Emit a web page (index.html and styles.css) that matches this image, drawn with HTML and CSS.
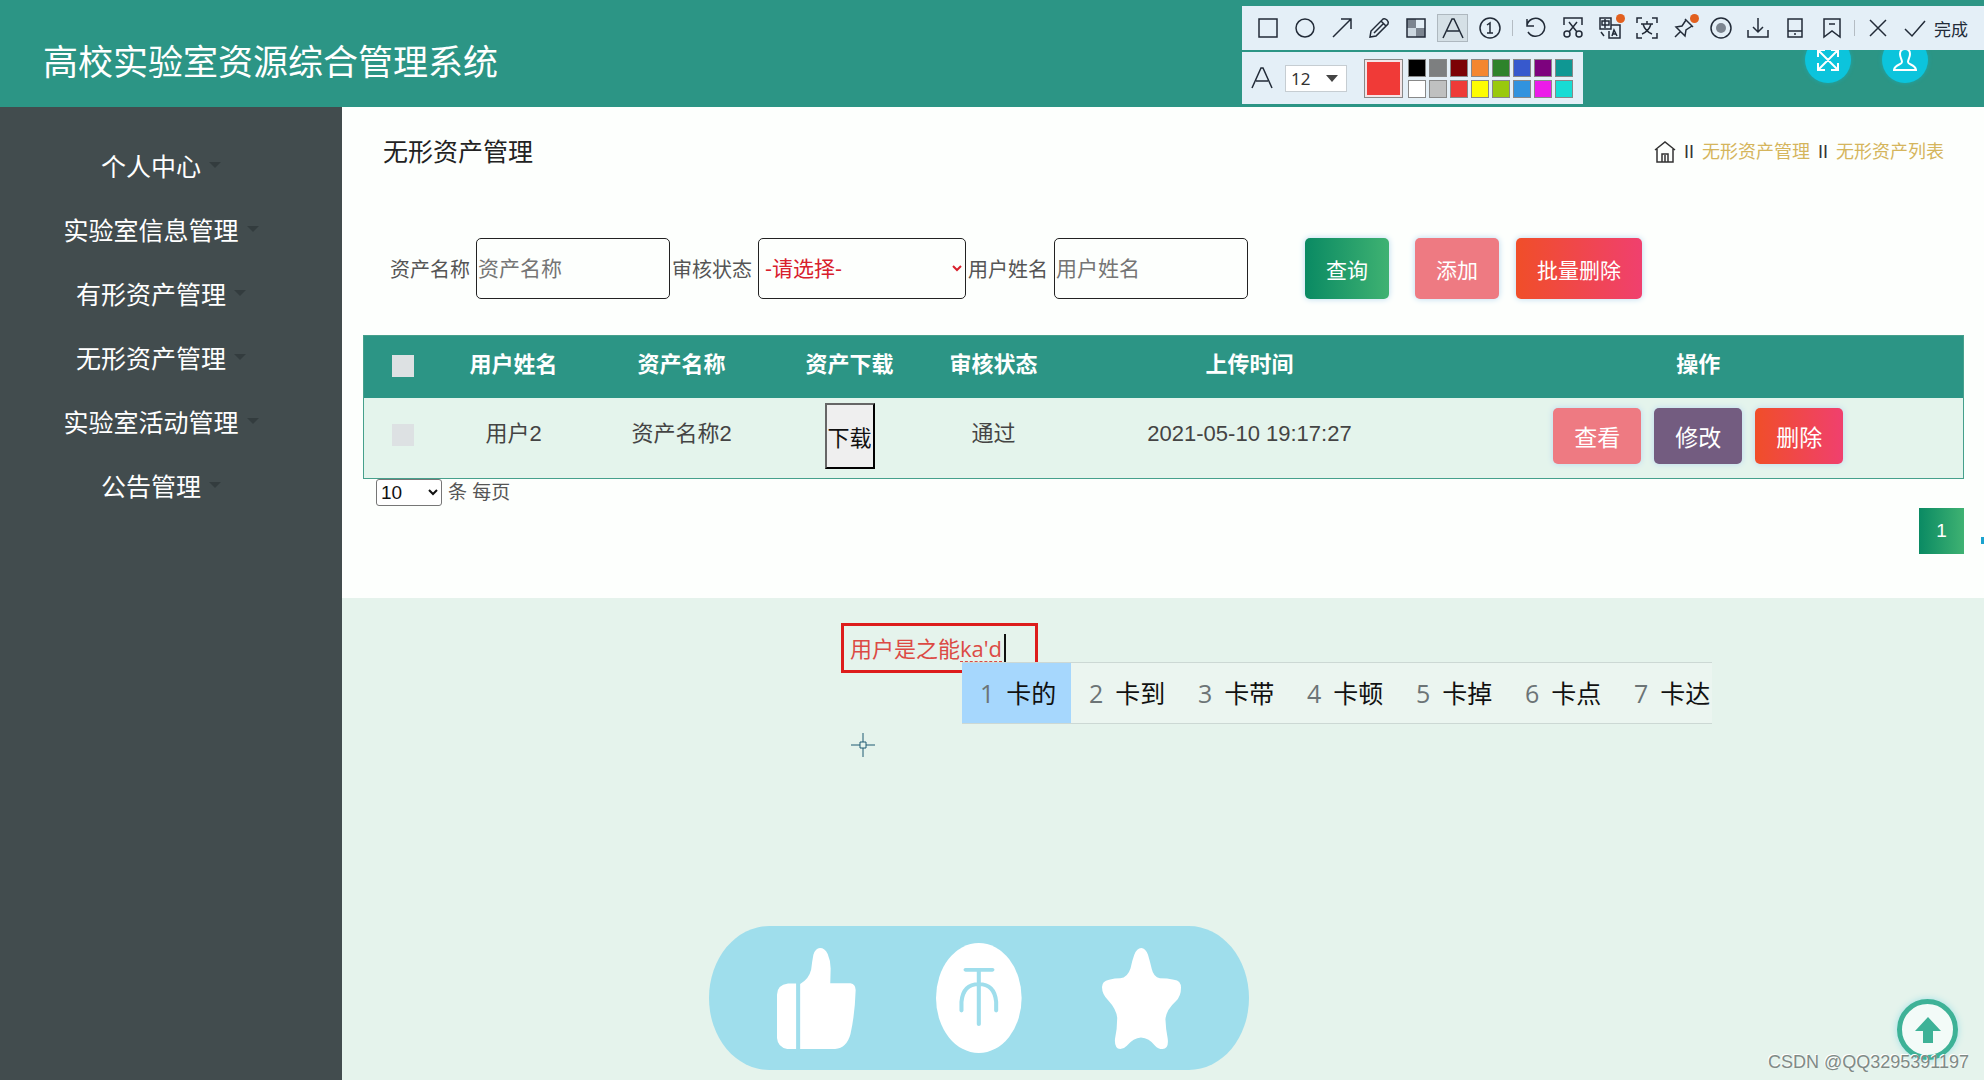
FILE: index.html
```html
<!DOCTYPE html>
<html lang="zh-CN">
<head>
<meta charset="utf-8">
<title>高校实验室资源综合管理系统</title>
<link rel="stylesheet" href="styles.css">
</head>
<body>
<header class="topbar">
  <h1 class="brand">高校实验室资源综合管理系统</h1>
  <div class="topbar-actions">
    <button class="round-btn" type="button" aria-label="全屏">
      <svg width="24" height="24" viewBox="0 0 24 24"><path d="M2 9V2h7M2 2l20 20M15 2h7v7M22 2L2 22M2 15v7h7M22 15v7h-7"/></svg>
    </button>
    <button class="round-btn" type="button" aria-label="用户">
      <svg width="24" height="24" viewBox="0 0 24 24"><path d="M12 1c-4 0-5 3-5 5 0 4 2 5 2 8 0 3-7 2-8 8h22c-1-6-8-5-8-8 0-3 2-4 2-8 0-2-1-5-5-5z"/></svg>
    </button>
  </div>
</header>

<div class="layout">
  <nav class="sidebar">
    <a class="menu-item" href="#">个人中心<i class="caret"></i></a>
    <a class="menu-item" href="#">实验室信息管理<i class="caret"></i></a>
    <a class="menu-item" href="#">有形资产管理<i class="caret"></i></a>
    <a class="menu-item" href="#">无形资产管理<i class="caret"></i></a>
    <a class="menu-item" href="#">实验室活动管理<i class="caret"></i></a>
    <a class="menu-item" href="#">公告管理<i class="caret"></i></a>
  </nav>

  <main class="content">
    <section class="panel">
      <div class="panel-head">
        <h2 class="page-title">无形资产管理</h2>
        <div class="breadcrumb">
          <a href="#" class="home" aria-label="首页">
            <svg width="22" height="22" viewBox="0 0 22 22"><path d="M1 9l10-8 10 8M3 8v13h16V8M8 21v-8h6v8M11 14v7"/></svg>
          </a>
          <span>II</span>
          <a href="#">无形资产管理</a>
          <span>II</span>
          <a href="#">无形资产列表</a>
        </div>
      </div>

      <form class="filters">
        <div class="field"><label for="asset">资产名称</label><input id="asset" class="control" type="text" placeholder="资产名称"></div>
        <div class="field"><label for="status">审核状态</label><select id="status" class="control control-select"><option>-请选择-</option></select></div>
        <div class="field"><label for="user">用户姓名</label><input id="user" class="control" type="text" placeholder="用户姓名"></div>
        <div class="filter-actions">
          <button class="btn btn-search" type="button">查询</button>
          <div class="btn-pair">
            <button class="btn btn-pink" type="button">添加</button>
            <button class="btn btn-danger" type="button">批量删除</button>
          </div>
        </div>
      </form>

      <div class="table-wrap">
        <table class="grid">
          <colgroup><col class="c-check"><col class="c-user"><col class="c-asset"><col class="c-file"><col class="c-status"><col class="c-time"><col class="c-ops"></colgroup>
          <thead>
            <tr><th><input class="tick" type="checkbox" aria-label="全选"></th><th>用户姓名</th><th>资产名称</th><th>资产下载</th><th>审核状态</th><th>上传时间</th><th>操作</th></tr>
          </thead>
          <tbody>
            <tr>
              <td><input class="tick" type="checkbox" aria-label="选择用户2"></td>
              <td>用户2</td>
              <td>资产名称2</td>
              <td class="with-button"><button class="download" type="button">下载</button></td>
              <td>通过</td>
              <td>2021-05-10 19:17:27</td>
              <td class="with-button">
                <div class="ops">
                  <button class="btn btn-row btn-pink" type="button">查看</button>
                  <button class="btn btn-row btn-purple" type="button">修改</button>
                  <button class="btn btn-row btn-danger" type="button">删除</button>
                </div>
              </td>
            </tr>
          </tbody>
        </table>
        <div class="page-size">
          <select id="size"><option>10</option></select>
          <label for="size">条 每页</label>
        </div>
        <div class="pager"><button class="page-no" type="button">1</button></div>
      </div>
      <span class="edge-mark"></span>
    </section>
  </main>
</div>

<div class="snip-bar">
  <div class="tools">
    <button type="button" aria-label="矩形"><svg viewBox="0 0 22 22"><path d="M2 2h18v18H2z"/></svg></button>
    <button type="button" aria-label="椭圆"><svg viewBox="0 0 22 22"><circle cx="11" cy="11" r="9"/></svg></button>
    <button type="button" aria-label="箭头"><svg viewBox="0 0 22 22"><path d="M2 20L20 2M10 2h10v10"/></svg></button>
    <button type="button" aria-label="画笔"><svg viewBox="0 0 22 22"><path d="M2 20l1-6L15 2q2-1 4 1t1 4L8 19zM13 4l5 5M6 16L15 7"/></svg></button>
    <button type="button" aria-label="马赛克"><svg viewBox="0 0 22 22"><path class="mosaic" d="M2 2h9v9H2zM11 11h9v9h-9z"/><path d="M2 2h18v18H2z"/><path class="solid" d="M2 11h9v9H2z" opacity=".12"/></svg></button>
    <button class="active" type="button" aria-label="文字"><svg viewBox="0 0 22 22"><path d="M1 21L10 2h2l9 19M5 14h12"/></svg></button>
    <button type="button" aria-label="序号"><svg viewBox="0 0 22 22"><circle cx="11" cy="11" r="10"/><path d="M8 8l3-2v10M8 16h6"/></svg></button>
    <span class="divider"></span>
    <button type="button" aria-label="撤销"><svg viewBox="0 0 22 22"><path d="M2 2v7h7M2 8a9 9 0 1 1 1 7"/></svg></button>
    <button type="button" aria-label="裁剪"><svg viewBox="0 0 22 22"><path d="M2 8V1h18v7M7 5l8 10M15 5L7 15"/><circle cx="5" cy="17" r="3"/><circle cx="17" cy="17" r="3"/></svg></button>
    <button type="button" aria-label="翻译"><svg viewBox="0 0 22 22"><path d="M1 1h11v11H1zM3 4h7v4H3zM6 2v9M12 8h9v13H10v-7M13 19l2-6 3 6M14 17h3M2 15l3 4"/></svg><i class="dot"></i></button>
    <button type="button" aria-label="文字识别"><svg viewBox="0 0 22 22"><path d="M1 6V1h5M16 1h5v5M21 16v5h-5M6 21H1v-5M5 7h12M11 4v3M7 7q2 7 9 10M15 7q-2 7-9 10"/></svg></button>
    <button type="button" aria-label="贴图"><svg viewBox="0 0 22 22"><path d="M12 2l8 8M13 3L9 9l-6 1 9 9 1-6 6-4M8 14l-6 6"/></svg><i class="dot"></i></button>
    <button type="button" aria-label="录制"><svg viewBox="0 0 22 22"><circle cx="11" cy="11" r="10"/><circle class="mosaic" cx="11" cy="11" r="5"/></svg></button>
    <button type="button" aria-label="保存"><svg viewBox="0 0 22 22"><path d="M11 1v14M6 10l5 5 5-5M1 13v7h20v-7"/></svg></button>
    <button type="button" aria-label="发送到手机"><svg viewBox="0 0 22 22"><path d="M4 2h14v18H4zM4 14h14M10 17h2"/></svg></button>
    <button type="button" aria-label="收藏"><svg viewBox="0 0 22 22"><path d="M3 2h16v18l-8-6-8 6zM8 7h6"/></svg></button>
    <span class="divider"></span>
    <button type="button" aria-label="关闭"><svg viewBox="0 0 22 22"><path d="M3 3l16 16M19 3L3 19"/></svg></button>
    <button class="done" type="button"><svg viewBox="0 0 22 22"><path d="M1 12l7 7L21 4"/></svg>完成</button>
  </div>
  <div class="text-opts">
    <svg class="font-icon" viewBox="0 0 22 22"><path d="M1 21L10 1h2l9 20M5 14h12"/></svg>
    <select class="font-size" aria-label="字号"><option>12</option></select>
    <span class="current-color"></span>
    <div class="palette">
      <button type="button" class="k-black" aria-label="黑"></button><button type="button" class="k-gray" aria-label="灰"></button><button type="button" class="k-maroon" aria-label="深红"></button><button type="button" class="k-orange" aria-label="橙"></button><button type="button" class="k-green" aria-label="绿"></button><button type="button" class="k-blue" aria-label="蓝"></button><button type="button" class="k-purple" aria-label="紫"></button><button type="button" class="k-teal" aria-label="青绿"></button>
      <button type="button" class="k-white" aria-label="白"></button><button type="button" class="k-silver" aria-label="银"></button><button type="button" class="k-red" aria-label="红"></button><button type="button" class="k-yellow" aria-label="黄"></button><button type="button" class="k-lime" aria-label="黄绿"></button><button type="button" class="k-sky" aria-label="天蓝"></button><button type="button" class="k-magenta" aria-label="洋红"></button><button type="button" class="k-cyan" aria-label="青"></button>
    </div>
  </div>
</div>

<div class="note">用户是之能<span class="composing">ka'd</span></div>

<ol class="ime">
  <li class="picked"><span>1</span>卡的</li>
  <li><span>2</span>卡到</li>
  <li><span>3</span>卡带</li>
  <li><span>4</span>卡顿</li>
  <li><span>5</span>卡掉</li>
  <li><span>6</span>卡点</li>
  <li><span>7</span>卡达</li>
</ol>

<svg class="crosshair" width="24" height="24" viewBox="0 0 24 24"><path d="M12 0v9M12 15v9M0 12h9M15 12h9M9 9h6v6H9z"/></svg>

<div class="reactions">
  <svg class="thumb" viewBox="235 110 215 304" preserveAspectRatio="none"><path d="M287 217h-22q-30 4-30 34v130q2 28 28 33h24zM298 218q24-14 30-43 2-22 6-45 6-20 18-20 13 0 21 18 8 20 8 44l-1 44h55q15 3 14 23-2 70-14 130-10 42-42 45h-95z"/></svg>
  <svg class="coin" viewBox="665 98 233 332" preserveAspectRatio="none"><ellipse cx="781" cy="264" rx="116" ry="166"/><path class="coin-line" d="M745 179h73M781 179v164M734 302v-26q4-54 47-54t47 54v26"/></svg>
  <svg class="star" viewBox="1113 114 213 300" preserveAspectRatio="none"><path d="M1219 114q11 0 18 20 6 22 10 42 5 25 22 28 20 0 38 4 19 2 19 24 0 26-14 40-26 26-28 54 1 30 6 56 4 32-14 32-12 0-20-10-16-22-38-24-20 2-38 24-8 10-18 10-16-2-14-30 6-30 6-62-2-26-24-52-17-18-17-40 0-18 19-22 16-4 30-4 20-2 28-30 4-22 10-40 7-20 19-20z"/></svg>
</div>

<button class="to-top" type="button" aria-label="返回顶部"><svg width="28" height="28" viewBox="0 0 28 28"><path d="M14 1l13 14h-8v12H9V15H1z"/></svg></button>
<div class="watermark">CSDN @QQ3295391197</div>
</body>
</html>
```
FILE: styles.css
```css
* { box-sizing: border-box; }

body {
  margin: 0;
  min-height: 100vh;
  display: flex;
  flex-direction: column;
  position: relative;
  overflow-x: hidden;
  background: #e5f3ec;
  color: #444;
  font-family: "Liberation Sans", "Noto Sans CJK SC", sans-serif;
}

button, input, select { font-family: inherit; margin: 0; }
a { color: inherit; text-decoration: none; }
svg { fill: none; stroke: currentColor; display: block; }

/* header */
.topbar {
  height: 107px;
  padding: 0 56px 0 43px;
  display: flex;
  align-items: center;
  justify-content: space-between;
  background: #2c9585;
  color: #fff;
}
.brand { margin: 18px 0 0; font-size: 35px; line-height: 48px; font-weight: 400; }
.topbar-actions { display: flex; gap: 31px; margin-top: 12px; }
.round-btn {
  width: 46px;
  height: 46px;
  padding: 0;
  border: 0;
  border-radius: 50%;
  display: grid;
  place-items: center;
  background: #0cc4dc;
  color: #fff;
  box-shadow: 0 0 4px #1aa8ae;
}
.round-btn svg { stroke-width: 2; }

/* sidebar */
.layout { flex: 1; display: flex; }
.sidebar { width: 342px; flex: none; padding: 26px 20px 0 0; background: #424c4e; }
.menu-item {
  height: 64px;
  display: flex;
  align-items: center;
  justify-content: center;
  gap: 8px;
  color: #fff;
  font-size: 25px;
}
.caret { border: 6px solid transparent; border-top-color: #333c3e; border-bottom: 0; }

/* panel */
.content { flex: 1; min-width: 0; }
.panel { position: relative; height: 491px; background: #fdfffd; }
.panel-head {
  display: flex;
  align-items: center;
  justify-content: space-between;
  padding: 27px 40px 0 41px;
}
.page-title { margin: 0; font-size: 25px; line-height: 36px; font-weight: 400; color: #222; }
.breadcrumb { display: flex; align-items: center; gap: 8px; font-size: 18px; line-height: 26px; color: #333; }
.breadcrumb a { color: #d5b55c; }
.breadcrumb .home { color: #333; }
.home svg { stroke-width: 1.5; }

.filters { display: flex; align-items: center; gap: 2px; padding: 68px 20px 0 48px; }
.field { display: flex; align-items: center; gap: 6px; font-size: 20px; color: #555; white-space: nowrap; }
.control {
  width: 194px;
  height: 61px;
  padding: 0 1px;
  border: 1px solid #222;
  border-radius: 5px;
  background: #fdfffd;
  font-size: 21px;
}
.control::placeholder { color: #757575; }
.control-select { width: 208px; padding: 0 5px 0 2px; color: #d8202c; }
.filter-actions { display: flex; gap: 26px; margin-left: 55px; }
.btn-pair { display: flex; gap: 17px; }
.btn {
  height: 61px;
  padding: 0 21px;
  border: 0;
  border-radius: 5px;
  color: #fff;
  font-size: 21px;
  white-space: nowrap;
  box-shadow: 0 0 6px #b9d8f0;
}
.btn-search, .page-no { background: linear-gradient(90deg, #0a8a63, #3fb272); }
.btn-pink { background: #ee7a82; }
.btn-purple { background: #735c80; }
.btn-danger { background: linear-gradient(90deg, #f04e29, #f0406e); }

/* table */
.table-wrap { margin: 36px 20px 0 21px; }
.grid {
  width: 100%;
  table-layout: fixed;
  border-collapse: collapse;
  border: 1px solid #46a08c;
  background: #e4f4ec;
  font-size: 22px;
  line-height: 24px;
  text-align: center;
}
.grid th { height: 62px; padding: 0 0 4px; background: #2c9585; color: #fff; }
.grid td { height: 81px; padding: 0 0 8px; }
.grid .with-button { padding: 0 0 4px; }
.c-check { width: 78px; }
.c-user { width: 9%; }
.c-asset { width: 12%; }
.c-file { width: 9%; }
.c-status { width: 9%; }
.c-time { width: 23%; }
.tick { appearance: none; width: 22px; height: 22px; background: #dde1e3; vertical-align: middle; }
.download {
  width: 50px;
  height: 66px;
  padding: 0;
  border: 2px outset #222;
  border-color: #666 #222 #222 #666;
  background: #efefef;
  color: #111;
  font-size: 22px;
  vertical-align: middle;
}
.ops { display: flex; justify-content: center; gap: 13px; }
.btn-row { height: 56px; font-size: 23px; }

.page-size { display: flex; align-items: center; gap: 6px; padding-left: 13px; font-size: 19px; line-height: 27px; color: #555; }
.page-size select { width: 66px; height: 27px; border: 1px solid #767676; border-radius: 3px; background: #fff; font-size: 19px; color: #111; }
.pager { display: flex; justify-content: flex-end; margin-top: 2px; }
.page-no { width: 45px; height: 46px; padding: 0; border: 0; color: #fff; font-size: 19px; }
.edge-mark { position: absolute; right: 0; top: 430px; width: 3px; height: 7px; background: #1ba3cf; }

/* screenshot toolbar */
.snip-bar { position: absolute; top: 6px; right: 0; width: 742px; color: #222b38; }
.tools {
  height: 44px;
  padding-left: 7px;
  display: flex;
  align-items: center;
  background: #e4eff7;
}
.tools button {
  position: relative;
  width: 37px;
  height: 28px;
  padding: 0;
  border: 0;
  display: grid;
  place-items: center;
  background: none;
  color: inherit;
}
.tools svg { width: 22px; height: 22px; stroke-width: 1.5; }
.tools .active { width: 31px; margin: 0 3px; background: #d5e0e6; outline: 1px solid #aeb8bf; outline-offset: -1px; }
.tools .done { width: auto; margin-left: 8px; display: flex; align-items: center; gap: 8px; font-size: 17px; }
.mosaic { fill: #7c8590; stroke: none; }
.solid { fill: currentColor; stroke: none; }
.divider { width: 1px; height: 16px; margin: 0 4px; background: #b4bcc3; }
.dot { position: absolute; right: 3px; top: 0; width: 9px; height: 9px; border-radius: 50%; background: #e2601f; }

.text-opts {
  width: 341px;
  height: 52px;
  margin-top: 2px;
  padding-left: 9px;
  display: flex;
  align-items: center;
  background: #e4eff7;
}
.font-icon { width: 22px; height: 22px; stroke-width: 1.5; }
.font-size {
  appearance: none;
  width: 62px;
  height: 27px;
  margin: 0 17px 0 12px;
  padding: 0 5px;
  border: 1px solid #c6cdd2;
  background: #fff url("data:image/svg+xml,%3Csvg xmlns='http://www.w3.org/2000/svg' width='12' height='7'%3E%3Cpath d='M0 0h12L6 7z' fill='%23444'/%3E%3C/svg%3E") no-repeat right 8px center;
  color: #333;
  font: 17px "Noto Sans", sans-serif;
}
.current-color { width: 39px; height: 39px; margin-right: 5px; border: 1px solid #888; background: #f03a37; box-shadow: inset 0 0 0 2px #f3e4e6; }
.palette { display: grid; grid-template-columns: repeat(8, 18px); gap: 3px; }
.palette button { height: 18px; padding: 0; border: 1px solid #888; }
.k-black { background: #000; }
.k-gray { background: #7d7f80; }
.k-maroon { background: #7c0205; }
.k-orange { background: #f4862f; }
.k-green { background: #2e832b; }
.k-blue { background: #3759cd; }
.k-purple { background: #7d027e; }
.k-teal { background: #0f9793; }
.k-white { background: #fff; }
.k-silver { background: #bfc0c0; }
.k-red { background: #ee3a37; }
.k-yellow { background: #fdfd02; }
.k-lime { background: #99c90d; }
.k-sky { background: #3193de; }
.k-magenta { background: #ec1ce9; }
.k-cyan { background: #17dcd4; }

/* annotation being typed and its candidate list */
.note {
  position: absolute;
  left: 841px;
  top: 623px;
  width: 197px;
  height: 50px;
  padding-left: 6px;
  border: 3px solid #dd1c1c;
  color: #dc4a44;
  font: 22px/44px "Open Sans", "Noto Sans CJK SC", sans-serif;
  white-space: nowrap;
}
.composing { display: inline-block; line-height: 28px; padding-right: 2px; border-right: 2px solid #111; text-decoration: underline dashed 1px; text-underline-offset: 4px; }
.ime {
  position: absolute;
  left: 962px;
  top: 662px;
  width: 750px;
  margin: 0;
  padding: 0;
  overflow: hidden;
  display: flex;
  list-style: none;
  border: solid #ccd8d4;
  border-width: 1px 0;
  background: #ebf5f0;
  color: #111;
  font: 25px/60px "Open Sans", "Noto Sans CJK SC", sans-serif;
}
.ime li { flex: none; width: 109px; padding-left: 18px; display: flex; gap: 12px; white-space: nowrap; }
.ime span { color: #6c7476; }
.ime .picked { background: #a6d7fd; }
.crosshair { position: absolute; left: 851px; top: 733px; color: #1f5a72; }

/* floating reactions */
.reactions {
  position: absolute;
  left: 709px;
  top: 926px;
  width: 540px;
  height: 144px;
  padding: 0 68px;
  display: flex;
  align-items: center;
  justify-content: space-between;
  border-radius: 60px / 72px;
  background: #9fdeec;
}
.reactions svg { fill: #fff; stroke: none; }
.thumb, .star { width: 79px; height: 101px; }
.coin { width: 86px; height: 110px; }
.reactions .coin-line { fill: none; stroke: #9fdeec; stroke-width: 11; stroke-linecap: round; }

.to-top {
  position: absolute;
  right: 26px;
  top: 999px;
  width: 61px;
  height: 61px;
  padding: 0;
  display: grid;
  place-items: center;
  border: 5px solid #3eb297;
  border-radius: 50%;
  background: #f3fbf8;
  box-shadow: 0 0 7px #9fe0e6;
  color: #3eb297;
}
.to-top svg { fill: currentColor; stroke: none; }
.watermark {
  position: absolute;
  right: 15px;
  top: 1051px;
  font-size: 18px;
  line-height: 22px;
  color: #808a86;
  text-shadow: -1px -1px 0 #fff;
}
```
